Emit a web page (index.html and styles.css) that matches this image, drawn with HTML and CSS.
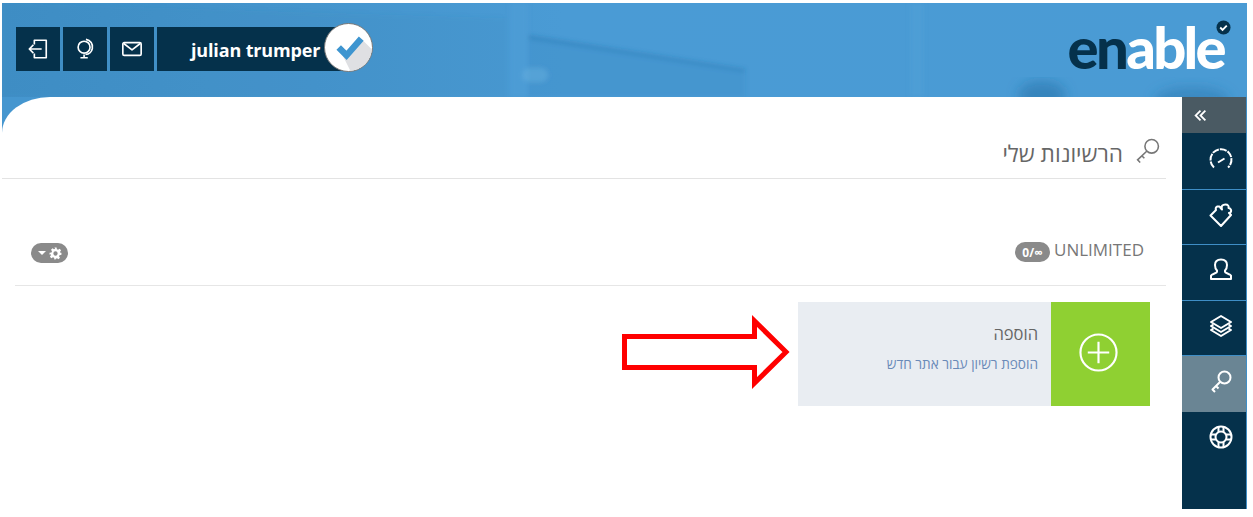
FILE: index.html
```html
<!DOCTYPE html>
<html lang="he">
<head>
<meta charset="utf-8">
<title>enable</title>
<link rel="stylesheet" href="styles.css">
</head>
<body>
<div class="frame">
  <header class="topbar">
    <svg class="topbar-bg" viewBox="0 0 1245 94" preserveAspectRatio="none" aria-hidden="true">
      <defs>
        <filter id="b2"><feGaussianBlur stdDeviation="2"/></filter>
        <filter id="b6"><feGaussianBlur stdDeviation="6"/></filter>
      </defs>
      <g filter="url(#b2)">
        <polygon points="526,32 743,66 743,94 526,94" fill="#2f7db5" opacity=".16"/>
        <polygon points="526,32 743,66 743,69 526,36" fill="#1f6da5" opacity=".3"/>
        <rect x="508" y="0" width="18" height="94" fill="#5fa9dc" opacity=".18"/>
        <rect x="908" y="0" width="14" height="94" fill="#5fa9dc" opacity=".22"/>
        <rect x="520" y="65" width="26" height="14" rx="7" fill="#6db3e2" opacity=".4"/>
        <polygon points="0,0 505,15 505,94 0,94" fill="#2f7db5" opacity=".1"/>
      </g>
      <g filter="url(#b6)">
        <ellipse cx="1040" cy="92" rx="24" ry="14" fill="#1f6da5" opacity=".5"/>
        <ellipse cx="1190" cy="98" rx="38" ry="14" fill="#2b78b0" opacity=".5"/>
      </g>
    </svg>

    <nav class="user-nav">
      <a class="nav-btn">
        <svg class="nav-icon" viewBox="0 0 24 24"><path d="M8 7V2.500h13v19H8V17"/><path d="M16 12H2.500M7 7.500L2.500 12 7 16.500"/></svg>
      </a>
      <a class="nav-btn">
        <svg class="nav-icon" viewBox="0 0 24 24"><circle cx="11" cy="10" r="6.500"/><path d="M13 1.500c5 1 8 5 7 10-.7 3.400-3.600 6-7.500 6.500M11 18v3M7 21.500h8"/></svg>
      </a>
      <a class="nav-btn">
        <svg class="nav-icon" viewBox="0 0 24 24"><rect x="2" y="5" width="20" height="14" rx="1.500"/><path d="M3 6l9 7 9-7"/></svg>
      </a>
      <a class="name-btn">
        <span class="name-text">julian trumper</span>
        <span class="avatar">
          <svg viewBox="0 0 48 48"><path class="avatar-shadow" d="M14 24l8 8L37 15 48 26c-1 12-10 21-22 22z"/><path class="avatar-check" d="M14 24l8 8 15-17"/></svg>
        </span>
      </a>
    </nav>

    <div class="logo">
      <span class="logo-en">en</span><span class="logo-able">able</span>
      <svg class="logo-badge" viewBox="0 0 16 16"><circle cx="8" cy="8" r="7.500"/><path d="M4.500 8l2.500 2.500L11.500 6"/></svg>
    </div>
  </header>

  <div class="body">
    <main class="content">
      <div class="title-row" dir="rtl">
        <svg class="title-icon" viewBox="0 0 24 24"><circle cx="16" cy="8" r="6.500"/><path d="M11.500 12.500L2.500 21l2.500 2.500M6.500 17l2.500 2.500"/></svg>
        <h1 class="title">הרשיונות שלי</h1>
      </div>
      <section class="license">
        <div class="license-head">
          <span class="pill pill-tools">
            <span class="caret"></span>
            <svg class="gear" viewBox="0 0 24 24"><path d="M10 1h4l.6 3.200 2.200.9 2.700-1.800 2.800 2.800-1.800 2.700.9 2.200L23 10.600v3.800l-3.600.600-.9 2.200 1.800 2.700-2.800 2.800-2.700-1.800-2.200.9L12 23h-2l-.6-3.200-2.200-.9-2.700 1.800-2.800-2.800 1.800-2.700-.9-2.200L1 14.400v-3.800l3.600-.6.900-2.200-1.800-2.700 2.800-2.800 2.700 1.800 2.200-.9zM12 8a4 4 0 100 8 4 4 0 000-8z"/></svg>
          </span>
          <span class="license-label">
            <span class="pill pill-count">0/∞</span>
            <span class="license-name">UNLIMITED</span>
          </span>
        </div>
        <div class="license-body">
          <svg class="arrow" viewBox="0 0 172 76"><polygon points="4.500,22.500 134.500,22.500 134.500,7 166,38 134.500,69 134.500,53.500 4.500,53.500"/></svg>
          <a class="add-card">
            <span class="add-text" dir="rtl">
              <span class="add-title">הוספה</span>
              <span class="add-desc">הוספת רשיון עבור אתר חדש</span>
            </span>
            <span class="add-icon">
              <svg viewBox="0 0 40 40"><circle cx="20" cy="20" r="18.500"/><path d="M20 9v22M9 20h22"/></svg>
            </span>
          </a>
        </div>
      </section>
    </main>

    <aside class="sidebar">
      <button class="side-toggle">
        <svg viewBox="0 0 16 16"><path d="M8 2L2 8l6 6M14 2L8 8l6 6"/></svg>
      </button>
      <a class="side-item">
        <svg class="side-icon" viewBox="0 0 24 24"><path class="gauge-arc" d="M5 20.500a10.500 10.500 0 1 1 14 0"/><path d="M9 15.500l6.500-4"/></svg>
      </a>
      <a class="side-item">
        <svg class="side-icon" viewBox="0 0 24 24"><path d="M1.500 12.500L7 7C5.500 3.500 10.500 2 11.500 5L13 6.500C12 3 13.500 1.500 16.500 1.500 19 1.500 20 3 19.500 5 21.500 5 23 7.500 21.500 9.500L20 10l2 2-10 11z"/></svg>
      </a>
      <a class="side-item">
        <svg class="side-icon" viewBox="0 0 24 24"><path d="M8 14v-1.500C6.500 11 6 9 6 7c0-3.500 2.500-5.500 6-5.500S18 3.500 18 7c0 2-.5 4-2 5.500V14c0 1 5.500 2 6 3.500V21H2v-3.500C2.500 16 8 15 8 14z"/></svg>
      </a>
      <a class="side-item">
        <svg class="side-icon" viewBox="0 0 24 24"><path d="M12 2l10 6-10 6L2 8z"/><path d="M4.500 10.500L2 12l10 6 10-6-2.500-1.500"/><path d="M4.500 14.500L2 16l10 6 10-6-2.500-1.500"/></svg>
      </a>
      <a class="side-item side-item-active">
        <svg class="side-icon" viewBox="0 0 24 24"><circle cx="15.500" cy="8.500" r="6"/><path d="M11 13L3.500 20.500 6 23M7 17l2.500 2.500"/></svg>
      </a>
      <a class="side-item side-item-last">
        <svg class="side-icon" viewBox="0 0 24 24"><circle cx="12" cy="12" r="10.500"/><circle cx="12" cy="12" r="5.500"/><path d="M9.500 2v5M14.500 2v5M9.500 17v5M14.500 17v5M2 9.500h5M2 14.500h5M17 9.500h5M17 14.500h5"/></svg>
      </a>
    </aside>
  </div>
</div>
</body>
</html>
```

FILE: styles.css
```css
* { box-sizing: border-box; }
html, body { margin: 0; padding: 0; background: #fff; }
body { height: 517px; overflow: hidden; font-family: "Open Sans", "Liberation Sans", sans-serif; }

.frame {
  margin: 3px 6px 0 2px;
  height: 506px;
  display: flex;
  flex-direction: column;
  background: #4596cf;
}

.topbar {
  position: relative;
  height: 94px;
  flex: none;
  display: flex;
  justify-content: space-between;
  padding: 24px 21px 0 14px;
  background: linear-gradient(90deg, #3f8fc7 0, #4595cd 25%, #4a9bd5 45%, #4a9bd4 100%);
}
.topbar-bg { position: absolute; inset: 0; width: 100%; height: 100%; }

.user-nav { position: relative; display: flex; gap: 3px; height: 44px; }
.nav-btn {
  width: 44px;
  height: 44px;
  background: #05314b;
  display: flex;
  align-items: center;
  justify-content: center;
}
.nav-icon {
  width: 22px;
  height: 22px;
  fill: none;
  stroke: #fff;
  stroke-width: 1.800;
  stroke-linejoin: round;
}
.name-btn {
  position: relative;
  width: 189px;
  height: 44px;
  background: #05314b;
  display: flex;
  align-items: center;
  padding: 1px 0 0 34px;
}
.name-text { color: #fff; font-size: 18px; font-weight: 700; letter-spacing: -.15px; white-space: nowrap; }
.avatar {
  position: absolute;
  left: 167px;
  top: -4px;
  width: 49px;
  height: 49px;
  border-radius: 50%;
  background: #fff;
  border: 1px solid #777;
  overflow: hidden;
}
.avatar svg { display: block; width: 100%; height: 100%; }
.avatar-shadow { fill: #dfe0e3; }
.avatar-check { fill: none; stroke: #3e95d0; stroke-width: 6.500; }

.logo {
  position: relative;
  display: flex;
  align-items: baseline;
  height: 60px;
  margin-top: -10px;
  padding-right: 2px;
  font-family: Lato, "Open Sans", sans-serif;
  font-size: 58px;
  line-height: 60px;
  font-weight: 900;
  letter-spacing: -2.700px;
}
.logo-en { color: #05314b; }
.logo-able { color: #fff; }
.logo-badge { position: absolute; right: -5px; top: 3px; width: 15px; height: 15px; }
.logo-badge circle { fill: #05314b; }
.logo-badge path { fill: none; stroke: #fff; stroke-width: 2; }

.body { flex: 1; display: flex; min-height: 0; }

.content {
  flex: 1;
  min-width: 0;
  background: #fff;
  border-top-left-radius: 48px 36px;
  padding-right: 16px;
}
.title-row {
  height: 82px;
  border-bottom: 1px solid #e3e3e3;
  display: flex;
  align-items: flex-start;
  gap: 12px;
  padding: 41px 6px 0 0;
}
.title-icon { width: 25px; height: 25px; fill: none; stroke: #777; stroke-width: 1.500; flex: none; }
.title { margin: 1px 0 0; font-size: 22.600px; line-height: 30px; font-weight: 400; color: #666; }

.license { margin-left: 13px; }
.license-head {
  height: 107px;
  border-bottom: 1px solid #e6e6e6;
  display: flex;
  justify-content: space-between;
  align-items: flex-start;
  padding: 58px 22px 0 16px;
}
.license-label { display: flex; align-items: center; gap: 4px; }
.license-name { color: #777; font-size: 17px; line-height: 22px; }
.pill {
  display: inline-flex;
  align-items: center;
  justify-content: center;
  height: 20px;
  border-radius: 10px;
  background: #8a8a8a;
  color: #fff;
  font-size: 12px;
  font-weight: 700;
}
.pill-count { width: 35px; margin-top: 5px; }
.pill-tools { width: 37px; gap: 3px; margin-top: 6px; }
.caret { width: 0; height: 0; border: 4px solid transparent; border-top-color: #fff; border-bottom-width: 0; }
.gear { width: 13px; height: 13px; fill: #fff; fill-rule: evenodd; }

.license-body {
  display: flex;
  justify-content: flex-end;
  align-items: center;
  margin-top: 16px;
  padding-right: 16px;
  gap: 6px;
}
.arrow { width: 172px; height: 76px; flex: none; margin-bottom: 4px; }
.arrow polygon { fill: #fff; stroke: #f00; stroke-width: 5; stroke-miterlimit: 6; }

.add-card { width: 352px; height: 104px; display: flex; background: #e9edf2; }
.add-text { flex: 1; display: flex; flex-direction: column; padding: 21px 13px 0 0; }
.add-title { color: #666; font-size: 16.500px; line-height: 22px; }
.add-desc { color: #6a8ab8; font-size: 13.600px; line-height: 20px; margin-top: 9px; }
.add-icon { width: 99px; padding: 0 4px 4px 0; background: #8fd032; display: flex; align-items: center; justify-content: center; }
.add-icon svg { width: 39px; height: 39px; fill: none; stroke: #fff; stroke-width: 2.200; }

.sidebar {
  width: 65px;
  flex: none;
  background: #05314b;
  border-right: 1px solid #3f8ec6;
  display: flex;
  flex-direction: column;
}
.side-toggle {
  height: 36px;
  background: #4a5a63;
  border: 0;
  padding: 0 0 0 12px;
  display: flex;
  align-items: center;
  margin-bottom: 1px;
}
.side-toggle svg { width: 13px; height: 13px; fill: none; stroke: #fff; stroke-width: 2.200; }
.side-item {
  height: 55.500px;
  display: flex;
  align-items: flex-start;
  padding: 13px 0 0 27px;
  border-bottom: 1px solid #3f8ec6;
}
.side-item-active { background: #6a8594; border-bottom: 0; }
.side-item-last { border-bottom: 0; }
.side-icon { width: 24px; height: 24px; fill: none; stroke: #fff; stroke-width: 2; stroke-linejoin: round; }
.gauge-arc { stroke-dasharray: 7 1; }
```
